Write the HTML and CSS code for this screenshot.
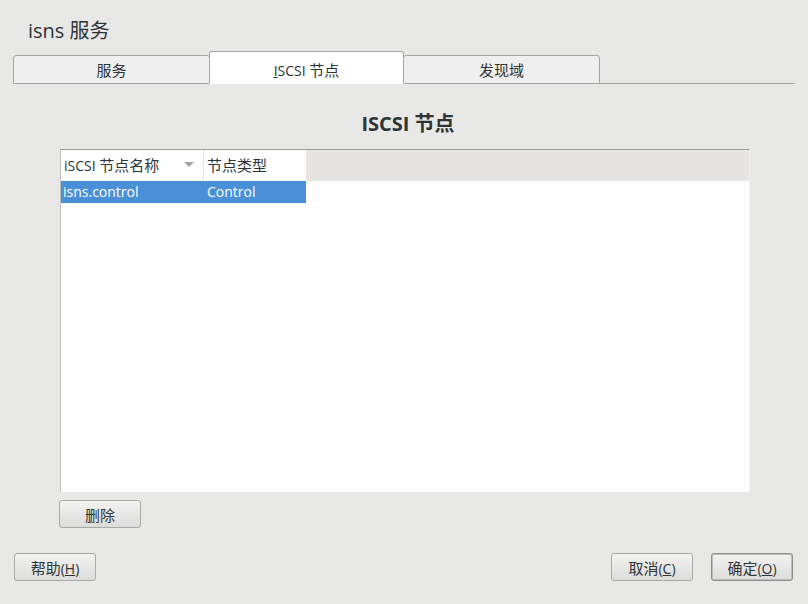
FILE: index.html
```html
<!DOCTYPE html>
<html>
<head>
<meta charset="UTF-8">
<title>isns 服务</title>
<link rel="stylesheet" href="styles.css">
</head>
<body>
	<div class="win">
		<h1 class="title">isns 服务</h1>
		<nav class="tabs">
			<span class="tab"><b class="zh">服务</b></span>
			<span class="tab active"><u>I</u>SCSI <b class="zh">节点</b></span>
			<span class="tab"><b class="zh">发现域</b></span>
		</nav>
		<h2 class="heading">ISCSI 节点</h2>
		<div class="table">
			<div class="thead">
				<div class="th c1">iSCSI <b class="zh">节点名称</b><i class="sort"></i></div>
				<div class="th c2"><b class="zh">节点类型</b></div>
				<div class="th rest"></div>
			</div>
			<div class="row sel">
				<div class="td c1">isns.control</div>
				<div class="td c2">Control</div>
			</div>
		</div>
		<div class="under">
			<button class="btn"><b class="zh">删除</b></button>
		</div>
		<div class="footer">
			<button class="btn"><b class="zh">帮助</b>(<u>H</u>)</button>
			<div class="right">
				<button class="btn"><b class="zh">取消</b>(<u>C</u>)</button>
				<button class="btn default"><b class="zh">确定</b>(<u>O</u>)</button>
			</div>
		</div>
	</div>
</body>
</html>
```

FILE: styles.css
```css
body {
	margin: 0;
	background: #e8e8e7;
	font-family: "Open Sans", "Noto Sans CJK SC", sans-serif;
	color: #2e3436;
}

.win {
	width: 808px;
	height: 604px;
	display: flex;
	flex-direction: column;
}

/* chinese glyphs run a bit larger than the latin ones */
.zh {
	font-weight: normal;
	font-size: 15px;
}

.title {
	margin: 0;
	padding: 16px 0 0 28px;
	height: 35px;
	font-size: 20px;
	font-weight: normal;
	line-height: 30px;
}

.title .zh {
	font-size: 21px;
}

.tabs {
	margin: 0 13px;
	height: 32px;
	display: flex;
	align-items: flex-end;
	border-bottom: 1px solid #a5a5a3;
}

.tab {
	box-sizing: border-box;
	width: 197px;
	height: 29px;
	margin-bottom: -1px;
	margin-right: -1px;
	background: #efefef;
	border: 1px solid #a5a5a3;
	border-radius: 3px 3px 0 0;
	font-size: 14px;
	line-height: 28px;
	text-align: center;
}

.tab.active {
	height: 33px;
	width: 195px;
	background: #fff;
	border-bottom-color: #fff;
	position: relative;
	z-index: 1;
	line-height: 36px;
}

.heading {
	margin: 27px 0 0 8px;
	height: 38px;
	font-size: 20px;
	font-weight: bold;
	text-align: center;
	line-height: 26px;
}

.table {
	box-sizing: border-box;
	margin-left: 60px;
	width: 690px;
	height: 343px;
	background: #fff;
	border-top: 1px solid #9c9c9a;
	border-left: 1px solid #bdbdbb;
	border-right: 1px solid #f4f4f3;
}

.thead {
	display: flex;
	height: 31px;
}

.th {
	box-sizing: border-box;
	padding-left: 3px;
	background: #fff;
	font-size: 14px;
	line-height: 31px;
}

.th.c1 {
	position: relative;
	border-right: 1px solid #e2e2e0;
}

.th.rest {
	flex: 1;
	background: #e6e5e3;
}

.c1 {
	width: 143px;
}

.c2 {
	width: 102px;
}

.sort {
	position: absolute;
	left: 123px;
	top: 12px;
	border-left: 5px solid transparent;
	border-right: 5px solid transparent;
	border-top: 5px solid #a3a3a1;
}

.row {
	display: flex;
	height: 22px;
	width: 245px;
}

.row.sel {
	background: #4a90d9;
	color: #fff;
}

.td {
	box-sizing: border-box;
	padding-left: 2px;
	font-size: 14px;
	line-height: 21px;
}

.td.c2 {
	padding-left: 3px;
}

.under {
	padding: 8px 0 0 59px;
	height: 53px;
}

.btn {
	box-sizing: border-box;
	width: 82px;
	height: 28px;
	padding: 0;
	border: 1px solid #a8a8a6;
	border-radius: 3px;
	background: linear-gradient(#f3f3f2, #dcdcdb);
	font-family: "Open Sans", "Noto Sans CJK SC", sans-serif;
	font-size: 14px;
	color: #2e3436;
}

.btn.default {
	border: 1px solid #8e8e8c;
	box-shadow: inset 0 0 0 1px #bdbdbb;
}

.footer {
	display: flex;
	justify-content: space-between;
	padding: 0 15px 0 14px;
}

.right {
	display: flex;
	gap: 18px;
}
```
